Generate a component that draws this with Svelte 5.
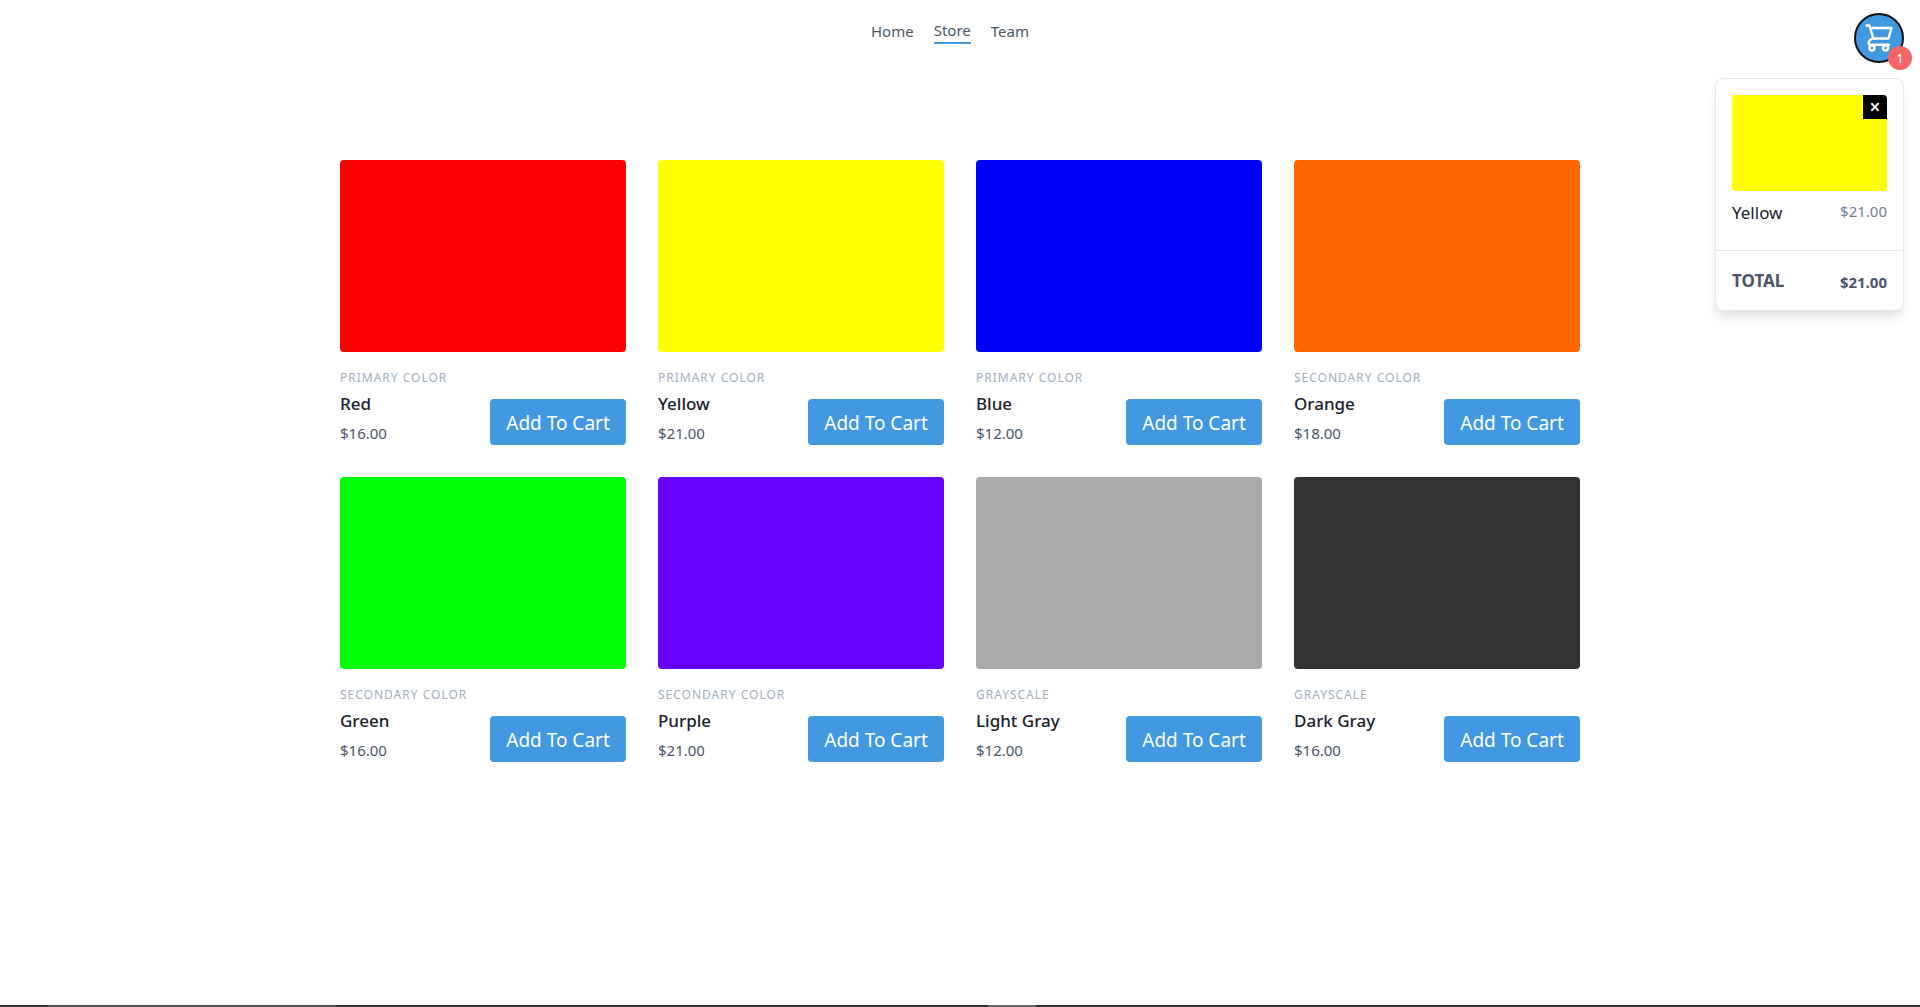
<script>
  const products = [
    { category: 'Primary Color', name: 'Red', price: 16, tone: 'red' },
    { category: 'Primary Color', name: 'Yellow', price: 21, tone: 'yellow' },
    { category: 'Primary Color', name: 'Blue', price: 12, tone: 'blue' },
    { category: 'Secondary Color', name: 'Orange', price: 18, tone: 'orange' },
    { category: 'Secondary Color', name: 'Green', price: 16, tone: 'green' },
    { category: 'Secondary Color', name: 'Purple', price: 21, tone: 'purple' },
    { category: 'Grayscale', name: 'Light Gray', price: 12, tone: 'light-gray' },
    { category: 'Grayscale', name: 'Dark Gray', price: 16, tone: 'dark-gray' }
  ];

  let cart = $state([products[1]]);
  let open = $state(true);
  let total = $derived(cart.reduce((sum, item) => sum + item.price, 0));

  const money = (n) => '$' + n.toFixed(2);
  const add = (product) => cart.push(product);
  const remove = (index) => cart.splice(index, 1);
</script>

<div class="page">
  <header>
    <nav>
      <a href="#home">Home</a>
      <a href="#store" class="active" aria-current="page">Store</a>
      <a href="#team">Team</a>
    </nav>
    <div class="cart">
      <button class="cart-button" aria-label="Cart" aria-expanded={open} onclick={() => (open = !open)}>
        <svg viewBox="0 0 28 28" width="28" height="28" aria-hidden="true">
          <path d="M1.500 1.500H4.500L8.300 14.500H23.500L26.500 4H6M8.300 14.500C6 14.500 3.500 17 3.500 19C3.500 20.300 4.300 20.800 5.500 20.800H24" />
          <circle cx="7" cy="24" r="2.500" />
          <circle cx="20.500" cy="24" r="2.500" />
        </svg>
        <span class="badge">{cart.length}</span>
      </button>
      {#if open}
        <section class="panel" aria-label="Cart contents">
          <ul>
            {#each cart as item, i}
              <li>
                <div class="thumb {item.tone}">
                  <button class="remove" aria-label="Remove {item.name}" onclick={() => remove(i)}>×</button>
                </div>
                <div class="line">
                  <h2>{item.name}</h2>
                  <span class="line-price">{money(item.price)}</span>
                </div>
              </li>
            {/each}
          </ul>
          <div class="total">
            <span>TOTAL</span>
            <span class="total-price">{money(total)}</span>
          </div>
        </section>
      {/if}
    </div>
  </header>

  <main>
    {#each products as product}
      <article>
        <div class="swatch {product.tone}"></div>
        <div class="info">
          <div>
            <h3>{product.category}</h3>
            <h2>{product.name}</h2>
            <p>{money(product.price)}</p>
          </div>
          <button class="add" onclick={() => add(product)}>Add To Cart</button>
        </div>
      </article>
    {/each}
  </main>

  <footer><span class="window"></span><span class="indicator"></span></footer>
</div>

<style>
  :global(body) {
    margin: 0;
    background: #fff;
  }
  .page {
    display: flex;
    flex-direction: column;
    min-height: 100vh;
    font-family: 'Noto Sans', 'Open Sans', sans-serif;
    font-size: 15px;
    line-height: 24px;
    color: #4a5568;
  }
  h2, h3, p, ul {
    margin: 0;
    padding: 0;
    list-style: none;
  }
  button {
    font-family: inherit;
    border: 0;
    padding: 0;
    cursor: pointer;
  }
  header {
    position: relative;
    padding: 18px 16px;
  }
  nav {
    display: flex;
    justify-content: center;
    align-items: center;
  }
  nav a {
    margin-right: 20px;
    color: inherit;
    text-decoration: none;
  }
  nav .active {
    border-bottom: 2px solid #4299e1;
  }
  .cart {
    position: absolute;
    top: 13px;
    right: 16px;
    display: flex;
    flex-direction: column;
    align-items: flex-end;
    gap: 15px;
  }
  .cart-button {
    position: relative;
    display: flex;
    align-items: center;
    justify-content: center;
    box-sizing: border-box;
    width: 50px;
    height: 50px;
    border: 2px solid #111;
    border-radius: 50%;
    background: #4299e1;
  }
  svg {
    fill: none;
    stroke: #fff;
    stroke-width: 2.4;
    stroke-linecap: round;
    stroke-linejoin: round;
  }
  .badge {
    position: absolute;
    right: -10px;
    bottom: -9px;
    width: 24px;
    height: 24px;
    border-radius: 50%;
    background: #f56565;
    color: #fff;
    font-size: 13px;
    line-height: 24px;
    text-align: center;
  }
  .panel {
    box-sizing: border-box;
    width: 189px;
    border: 1px solid #e2e8f0;
    border-radius: 8px;
    background: #fff;
    box-shadow: 0 10px 15px -3px rgba(0, 0, 0, 0.1), 0 4px 6px -2px rgba(0, 0, 0, 0.05);
  }
  .panel li {
    padding: 16px 16px 24px;
  }
  .thumb {
    position: relative;
    height: 96px;
    border-radius: 4px;
    overflow: hidden;
  }
  .remove {
    position: absolute;
    top: 0;
    right: 0;
    width: 24px;
    height: 24px;
    background: #000;
    color: #fff;
    font-size: 19px;
    font-weight: 600;
    line-height: 24px;
  }
  .line {
    display: flex;
    justify-content: space-between;
    align-items: flex-start;
    margin-top: 8px;
  }
  h2 {
    color: #1a202c;
    font-size: 17px;
    font-weight: 500;
    line-height: 27px;
  }
  .line h2 {
    font-weight: 400;
  }
  .line-price {
    color: #718096;
  }
  .total {
    display: flex;
    justify-content: space-between;
    align-items: flex-end;
    padding: 16px;
    border-top: 1px solid #e2e8f0;
    font-size: 17px;
    font-weight: 700;
    line-height: 27px;
  }
  .total-price {
    font-size: 15px;
    line-height: 24px;
  }
  main {
    display: grid;
    grid-template-columns: repeat(4, 1fr);
    gap: 32px;
    box-sizing: border-box;
    width: 100%;
    max-width: 1280px;
    margin: 0 auto;
    padding: 98px 20px;
  }
  .swatch {
    height: 192px;
    border-radius: 4px;
  }
  .red { background: #f00; }
  .yellow { background: #ff0; }
  .blue { background: #00f; }
  .orange { background: #f60; }
  .green { background: #0f0; }
  .purple { background: #60f; }
  .light-gray { background: #aaa; }
  .dark-gray { background: #333; }
  .info {
    display: flex;
    justify-content: space-between;
    align-items: flex-end;
    margin-top: 16px;
  }
  h3 {
    margin-bottom: 2px;
    color: #a0aec0;
    font-size: 12px;
    font-weight: 400;
    line-height: 20px;
    letter-spacing: 1px;
    text-transform: uppercase;
    white-space: nowrap;
  }
  p {
    margin-top: 4px;
  }
  .add {
    flex: none;
    min-width: 136px;
    padding: 9px 16px 7px;
    border-radius: 4px;
    background: #4299e1;
    color: #fff;
    font-size: 19px;
    line-height: 30px;
  }
  footer {
    display: flex;
    height: 2px;
    margin-top: auto;
    background: #333;
  }
  .window {
    width: 15%;
    margin-left: 48px;
    background: #555;
  }
  .indicator {
    width: 48px;
    margin-left: 652px;
    background: #666;
  }
</style>
